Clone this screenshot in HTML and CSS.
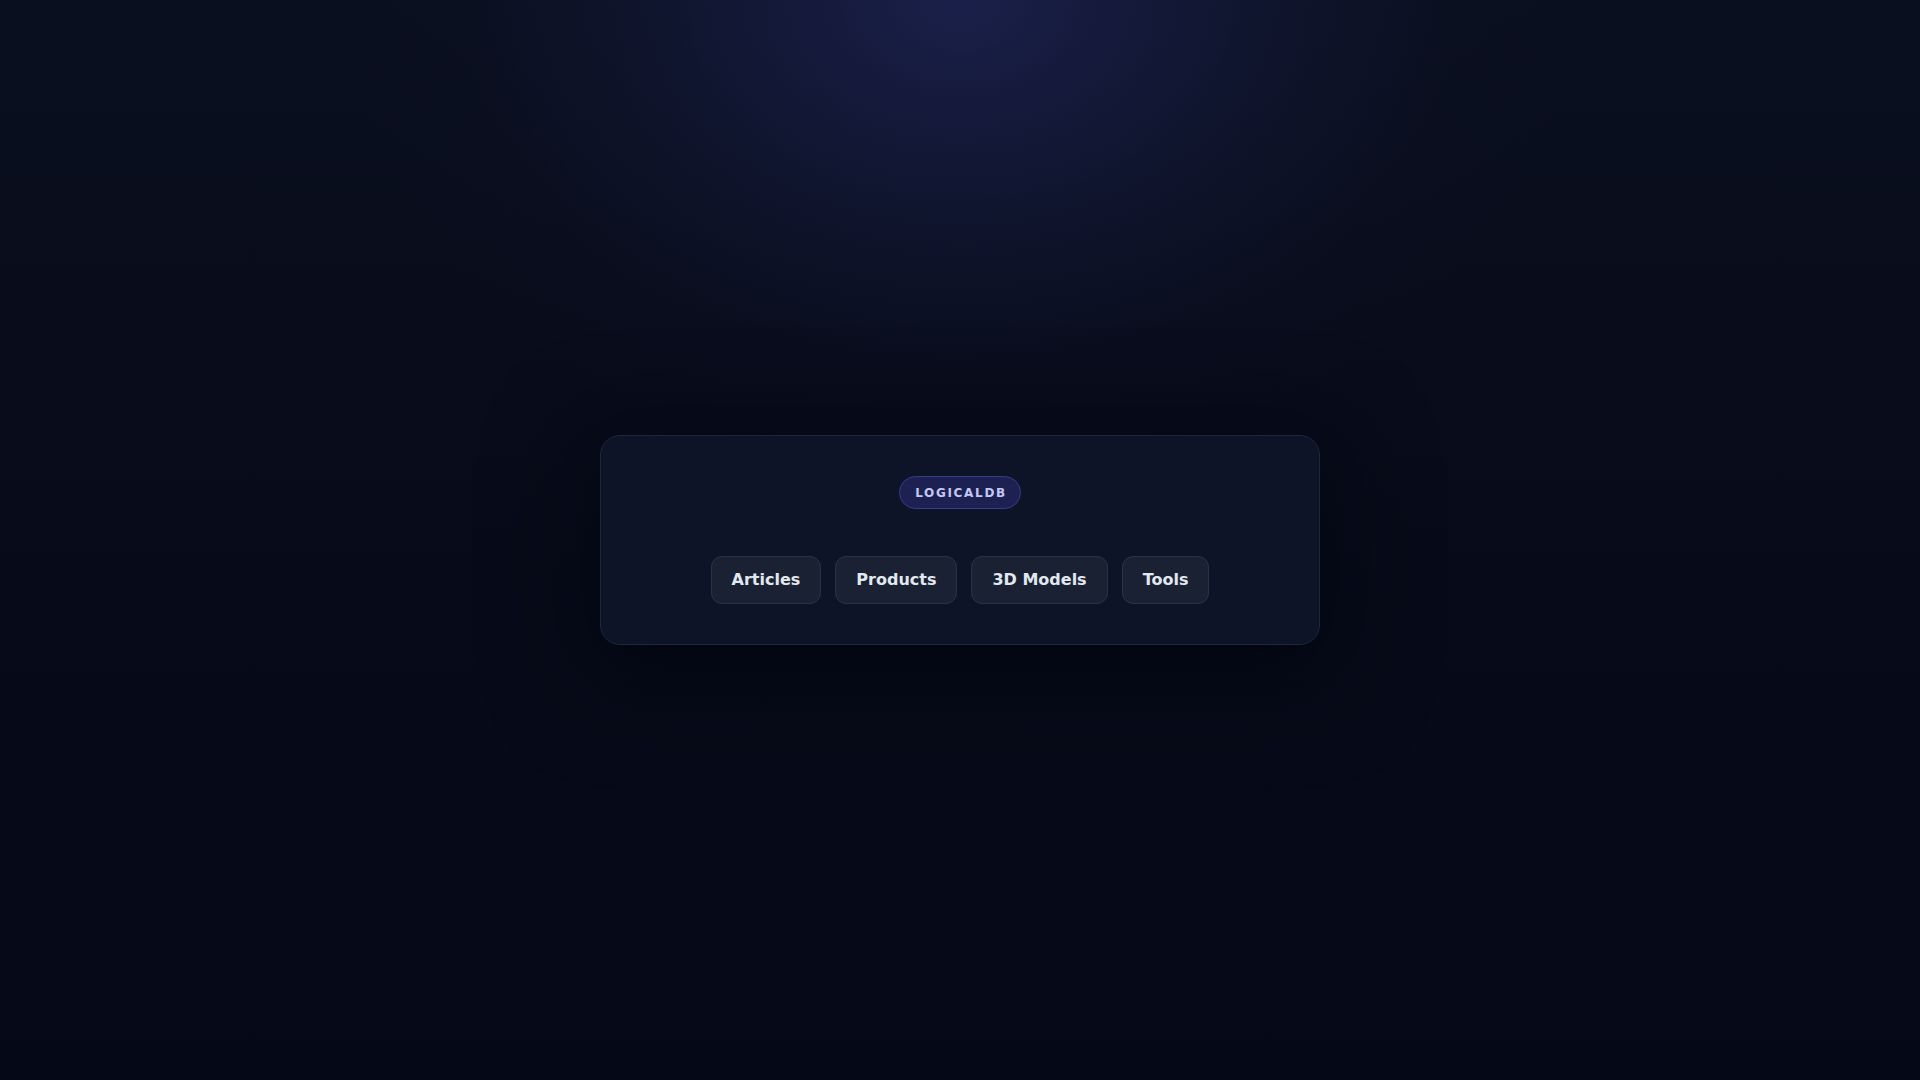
FILE: index.html
```html
<!DOCTYPE html>
<html lang="en">
<head>
<meta charset="utf-8">
<title>LogicalDB</title>
<link rel="stylesheet" href="styles.css">
</head>
<body>
<main class="page">
  <section class="card">
    <span class="badge">LOGICALDB</span>
    <nav class="links">
      <a class="btn" href="#">Articles</a>
      <a class="btn" href="#">Products</a>
      <a class="btn" href="#">3D Models</a>
      <a class="btn" href="#">Tools</a>
    </nav>
  </section>
</main>
</body>
</html>
```

FILE: styles.css
```css
html, body {
  margin: 0;
  padding: 0;
  height: 100%;
}
body {
  font-family: "DejaVu Sans", Verdana, sans-serif;
  background-color: #060a17;
  background-image:
    radial-gradient(ellipse 620px 470px at 50% 0, rgba(30, 36, 84, 0.8), rgba(24, 29, 68, 0.45) 45%, rgba(14, 18, 40, 0.12) 80%, rgba(10, 14, 30, 0) 100%),
    linear-gradient(180deg, #0a0f1f 0%, #070b19 55%, #050816 100%);
  background-repeat: no-repeat;
  color: #e2e8f0;
}
.page {
  min-height: 100vh;
  display: flex;
  align-items: center;
  justify-content: center;
}
.card {
  width: 720px;
  box-sizing: border-box;
  padding: 40px;
  border: 1px solid #1f2638;
  border-radius: 20px;
  background: #0e1427;
  box-shadow: 0 20px 90px 20px rgba(2, 4, 12, 0.55);
  display: flex;
  flex-direction: column;
  align-items: center;
  gap: 47px;
}
.badge {
  display: inline-flex;
  align-items: center;
  height: 33px;
  box-sizing: border-box;
  padding: 1px 13px 0 15px;
  border: 1px solid #363c8a;
  border-radius: 999px;
  background: #1d2152;
  color: #c3c8f4;
  font-size: 12px;
  font-weight: bold;
  letter-spacing: 0.14em;
}
.links {
  display: flex;
  gap: 14px;
}
.btn {
  display: inline-block;
  padding: 11px 20px;
  line-height: 24px;
  font-size: 16px;
  font-weight: bold;
  color: #e2e8f0;
  text-decoration: none;
  background: #1a2133;
  border: 1px solid #2a3346;
  border-radius: 11px;
}
```
